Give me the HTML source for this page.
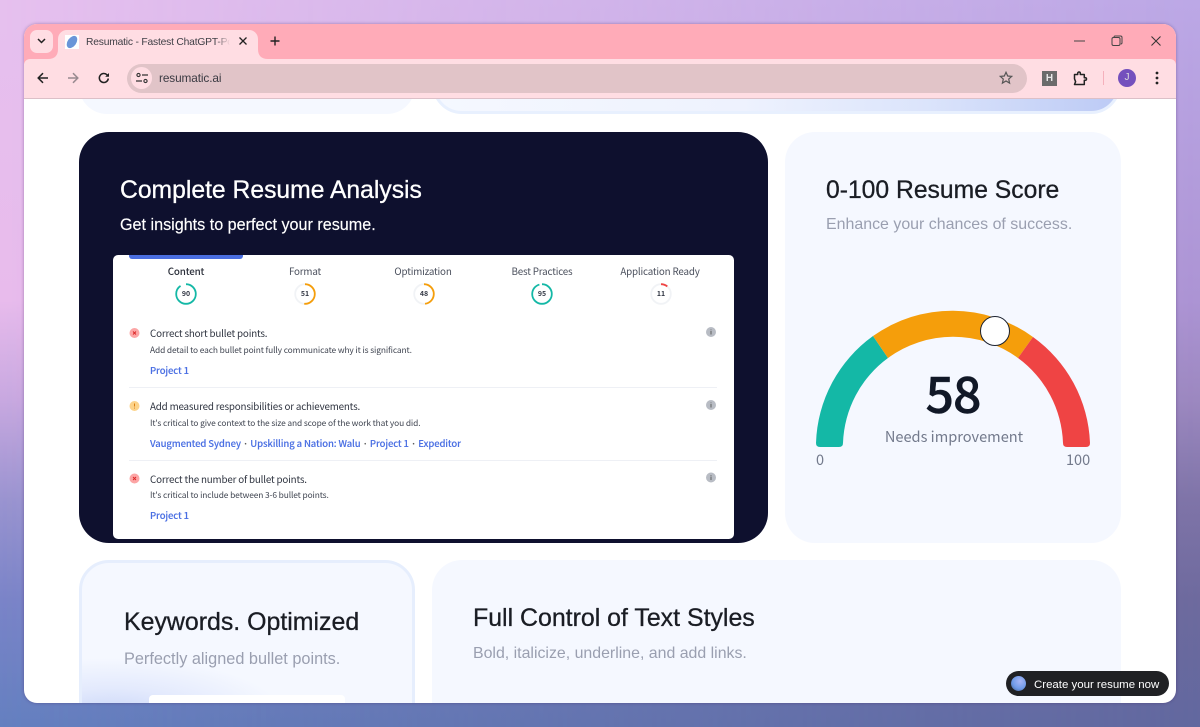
<!DOCTYPE html>
<html><head><meta charset="utf-8"><title>Resumatic</title>
<style>
html,body{margin:0;padding:0}
body{width:1200px;height:727px;overflow:hidden;position:relative;font-family:"Liberation Sans",sans-serif;
background:linear-gradient(180deg,#bca8e6 0,#ac94d4 300px,#9c88c0 400px,#7f74a8 500px,#6e6a9e 600px,#62689f 727px)}
#bgl{position:absolute;left:0;top:0;width:1200px;height:727px;background:linear-gradient(180deg,#e6c0ee 0,#e8bbec 300px,#c8a8e0 400px,#9a94d0 500px,#7a84c8 600px,#6480c0 727px);-webkit-mask-image:linear-gradient(90deg,#000,transparent);mask-image:linear-gradient(90deg,#000,transparent)}
#win{position:absolute;left:24px;top:24px;width:1152px;height:679px;border-radius:13px;overflow:hidden;background:#fff;box-shadow:0 0 3px rgba(60,30,90,.4)}
#win .a{margin-left:-24px;margin-top:-24px}
.a{position:absolute;white-space:nowrap}
.s{font-family:"Noto Sans CJK JP","Liberation Sans",sans-serif}
.h{font-size:24.7px;color:#1a1d24;-webkit-text-stroke:.3px currentColor}
.sub{font-size:16px;color:#9a9fb0}
.tab{font-size:9.8px;letter-spacing:-.18px;color:#4a4f5c;text-align:center;width:120px}
.t1{font-size:9.8px;letter-spacing:-.18px;color:#2f3440}
.t2{font-size:8.4px;letter-spacing:-.11px;color:#3f4450}
.l{font-size:9.5px;letter-spacing:-.12px;color:#4a6fe3;font-weight:500;-webkit-text-stroke:.1px currentColor}
.n{font-size:7px;font-weight:700;color:#333845;text-align:center;width:24px}
</style></head><body>
<div id="bgl"></div>
<div id="win">
<div class="a" style="left:24px;top:24px;width:1152px;height:40px;background:#ffabb8"></div>
<div class="a" style="left:24px;top:59px;width:1152px;height:39px;background:#ffdde3;border-bottom:1px solid #dcc0c8;border-radius:6px 6px 0 0"></div>

<div class="a" style="left:30px;top:30px;width:23px;height:23px;border-radius:7px;background:#ffdde3"></div>
<svg class="a" style="left:37px;top:37px" width="9" height="8" viewBox="0 0 9 8"><path d="M1 2l3.500 3.500L8 2" fill="none" stroke="#222" stroke-width="1.500"/></svg>
<div class="a" style="left:58px;top:30px;width:200px;height:30px;background:#ffdde3;border-radius:9px 9px 0 0"></div>
<svg class="a" style="left:48px;top:49px" width="220" height="11" viewBox="0 0 220 11"><path d="M10 0Q10 10 0 10H10ZM210 0Q210 10 220 10H210Z" fill="#ffdde3"/></svg>
<svg class="a" style="left:65px;top:35px" width="14" height="14" viewBox="0 0 14 14"><rect width="14" height="14" fill="#fff"/><ellipse cx="7" cy="7" rx="4.300" ry="6.800" transform="rotate(35 7 7)" fill="#6a95d8"/></svg>
<div class="a" style="left:86px;top:35px;width:144px;overflow:hidden;font-size:10.3px;letter-spacing:-.2px;color:#3f3f46;line-height:15px;-webkit-mask-image:linear-gradient(90deg,#000 90%,transparent);mask-image:linear-gradient(90deg,#000 90%,transparent)">Resumatic - Fastest ChatGPT-Powered</div>
<svg class="a" style="left:238px;top:36px" width="10" height="10" viewBox="0 0 10 10"><path d="M1.500 1.500l7 7M8.500 1.500l-7 7" stroke="#222" stroke-width="1.300"/></svg>
<svg class="a" style="left:270px;top:36px" width="10" height="10" viewBox="0 0 10 10"><path d="M5 .5v9M.5 5h9" stroke="#222" stroke-width="1.400"/></svg>

<svg class="a" style="left:37px;top:72px" width="12" height="12" viewBox="0 0 12 12"><path d="M11 6H1.500M6 1.200L1.200 6 6 10.800" fill="none" stroke="#222" stroke-width="1.500"/></svg>
<svg class="a" style="left:67px;top:72px" width="12" height="12" viewBox="0 0 12 12"><path d="M1 6h9.500M6 1.200L10.800 6 6 10.800" fill="none" stroke="#998a90" stroke-width="1.500"/></svg>
<svg class="a" style="left:98px;top:72px" width="12" height="12" viewBox="0 0 12 12"><path d="M10.300 6.500A4.500 4.500 0 1 1 9 2.800L10.500 4" fill="none" stroke="#222" stroke-width="1.500"/><path d="M11 1v3.800H7.200z" fill="#222"/></svg>
<div class="a" style="left:127px;top:64px;width:900px;height:29px;border-radius:15px;background:#e1c4c8"></div>
<div class="a" style="left:131px;top:67px;width:21px;height:22px;border-radius:11px;background:#ffdde3"></div>
<svg class="a" style="left:135px;top:72px" width="14" height="12" viewBox="0 0 14 12"><circle cx="3.500" cy="3" r="1.600" fill="none" stroke="#333" stroke-width="1.100"/><path d="M7 3h6M1 9h6" stroke="#333" stroke-width="1.200"/><circle cx="10.500" cy="9" r="1.600" fill="none" stroke="#333" stroke-width="1.100"/></svg>
<div class="a" style="left:159px;top:70px;font-size:11.8px;letter-spacing:-.1px;color:#3a3a42;line-height:16px">resumatic.ai</div>
<svg class="a" style="left:999px;top:71px" width="14" height="14" viewBox="0 0 14 14"><path d="M7 1.300l1.700 3.700 4 .4-3 2.700.9 4-3.600-2.100-3.600 2.100.9-4-3-2.700 4-.4z" fill="none" stroke="#555" stroke-width="1.200"/></svg>
<div class="a" style="left:1042px;top:71px;width:15px;height:15px;background:#6b6b6b;color:#e8e8e8;font-size:10px;font-weight:700;text-align:center;line-height:15px">H</div>
<svg class="a" style="left:1073px;top:71px" width="15" height="15" viewBox="0 0 15 15"><path d="M1.500 3.500h3.200V2.300a1.300 1.300 0 0 1 2.600 0v1.200h4v3.300h1a1.200 1.200 0 0 1 0 2.400h-1v4.300h-9.800l1.100-2.800-1.100-2.900z" fill="none" stroke="#222" stroke-width="1.500" stroke-linejoin="round"/></svg>
<div class="a" style="left:1103px;top:71px;width:1px;height:14px;background:#f5b0bc"></div>
<div class="a" style="left:1118px;top:69px;width:18px;height:18px;border-radius:9px;background:#7450bd;color:#ddd;font-size:10px;text-align:center;line-height:18px">J</div>
<svg class="a" style="left:1155px;top:71px" width="4" height="14" viewBox="0 0 4 14"><circle cx="2" cy="2" r="1.400" fill="#222"/><circle cx="2" cy="7" r="1.400" fill="#222"/><circle cx="2" cy="12" r="1.400" fill="#222"/></svg>
<svg class="a" style="left:1073px;top:40px" width="14" height="2" viewBox="0 0 14 2"><path d="M1 1h11" stroke="#444" stroke-width="1"/></svg>
<svg class="a" style="left:1111px;top:35px" width="12" height="12" viewBox="0 0 12 12"><rect x="1" y="2.500" width="8" height="8" rx="1.500" fill="none" stroke="#444"/><path d="M3 2.300V2.200a1.200 1.200 0 0 1 1.200-1.200h5.300A1.500 1.500 0 0 1 11 2.500v5.300A1.200 1.200 0 0 1 9.800 9" fill="none" stroke="#444"/></svg>
<svg class="a" style="left:1151px;top:36px" width="10" height="10" viewBox="0 0 10 10"><path d="M.5.500l9 9M9.500.500l-9 9" stroke="#333" stroke-width="1"/></svg>

<div class="a" style="left:79px;top:60px;width:336px;height:54px;border-radius:0 0 28px 28px;background:#f5f8ff;clip-path:inset(39px 0 0 0)"></div>
<div class="a" style="left:432px;top:30px;width:689px;height:84px;box-sizing:border-box;border:3px solid #e8f0fe;border-radius:30px;background:linear-gradient(92deg,#f5f8ff 0%,#eef2fe 45%,#dbe4fb 72%,#bccaf5 100%);clip-path:inset(69px 0 0 0)"></div>

<div class="a" style="left:79px;top:132px;width:689px;height:411px;border-radius:30px;background:#0e102e"></div>
<div class="a" style="left:120px;top:176px;font-size:24.7px;line-height:29px;color:#fff;-webkit-text-stroke:.3px #fff">Complete Resume Analysis</div>
<div class="a" style="left:120px;top:215px;font-size:16.15px;line-height:20px;color:#fff;-webkit-text-stroke:.15px #fff">Get insights to perfect your resume.</div>

<div class="a" style="left:113px;top:255px;width:621px;height:284px;background:#fff;border-radius:5px"></div>
<div class="a" style="left:129px;top:255px;width:114px;height:4px;background:#4a6ee0;border-radius:0 0 3px 3px"></div>

<div class="a s tab" style="left:126px;top:264px;font-weight:500;color:#2b2f3a;line-height:14px">Content</div>
<div class="a s tab" style="left:245px;top:264px;line-height:14px">Format</div>
<div class="a s tab" style="left:363px;top:264px;line-height:14px">Optimization</div>
<div class="a s tab" style="left:482px;top:264px;line-height:14px">Best Practices</div>
<div class="a s tab" style="left:600px;top:264px;line-height:14px">Application Ready</div>

<svg class="a" style="left:0;top:0" width="1200" height="727" viewBox="0 0 1200 727" fill="none" stroke-width="1.800">
<g transform="rotate(-90 186 294)"><circle cx="186" cy="294" r="9.800" stroke="#14b8a6" stroke-dasharray="55.400 6.200"/></g>
<circle cx="305" cy="294" r="9.800" stroke="#f1f3f6"/><g transform="rotate(-90 305 294)"><circle cx="305" cy="294" r="9.800" stroke="#f59e0b" stroke-dasharray="31.400 30.200"/></g>
<circle cx="424" cy="294" r="9.800" stroke="#f1f3f6"/><g transform="rotate(-90 424 294)"><circle cx="424" cy="294" r="9.800" stroke="#f59e0b" stroke-dasharray="29.500 32.100"/></g>
<g transform="rotate(-90 542 294)"><circle cx="542" cy="294" r="9.800" stroke="#14b8a6" stroke-dasharray="58.500 3.100"/></g>
<circle cx="661" cy="294" r="9.800" stroke="#f1f3f6"/><g transform="rotate(-90 661 294)"><circle cx="661" cy="294" r="9.800" stroke="#ef4444" stroke-dasharray="6.800 54.800"/></g>
</svg>
<div class="a s n" style="left:174px;top:289px;line-height:10px">90</div>
<div class="a s n" style="left:293px;top:289px;line-height:10px">51</div>
<div class="a s n" style="left:412px;top:289px;line-height:10px">48</div>
<div class="a s n" style="left:530px;top:289px;line-height:10px">95</div>
<div class="a s n" style="left:649px;top:289px;line-height:10px">11</div>

<svg class="a" style="left:0;top:0" width="1200" height="727" viewBox="0 0 1200 727">
<circle cx="134.500" cy="333" r="5" fill="#fca5a5"/><path d="M133 331.500l3 3M136 331.500l-3 3" stroke="#dc2626" stroke-width=".9"/>
<circle cx="134.500" cy="406" r="5" fill="#fcd38a"/><path d="M134.500 403.500v3M134.500 407.600v.9" stroke="#d97706" stroke-width=".9"/>
<circle cx="134.500" cy="478.500" r="5" fill="#fca5a5"/><path d="M133 477l3 3M136 477l-3 3" stroke="#dc2626" stroke-width=".9"/>
<circle cx="711" cy="332" r="5" fill="#b8bcc4"/><path d="M711 331v3.500M711 329.500v.8" stroke="#555" stroke-width=".9"/>
<circle cx="711" cy="405" r="5" fill="#b8bcc4"/><path d="M711 404v3.500M711 402.500v.8" stroke="#555" stroke-width=".9"/>
<circle cx="711" cy="477.500" r="5" fill="#b8bcc4"/><path d="M711 476.500v3.500M711 475v.8" stroke="#555" stroke-width=".9"/>
<path d="M129 387.500h588M129 460.500h588" stroke="#eef0f5" stroke-width="1"/>
</svg>

<div class="a s t1" style="left:150px;top:326px;line-height:14px">Correct short bullet points.</div>
<div class="a s t2" style="left:150px;top:344px;line-height:12px">Add detail to each bullet point fully communicate why it is significant.</div>
<div class="a s l" style="left:150px;top:363px;line-height:14px">Project 1</div>

<div class="a s t1" style="left:150px;top:399px;line-height:14px">Add measured responsibilities or achievements.</div>
<div class="a s t2" style="left:150px;top:417px;line-height:12px">It's critical to give context to the size and scope of the work that you did.</div>
<div class="a s l" style="left:150px;top:436px;line-height:14px">Vaugmented Sydney <span style="color:#555">·</span> Upskilling a Nation: Walu <span style="color:#555">·</span> Project 1 <span style="color:#555">·</span> Expeditor</div>

<div class="a s t1" style="left:150px;top:472px;line-height:14px">Correct the number of bullet points.</div>
<div class="a s t2" style="left:150px;top:489px;line-height:12px">It's critical to include between 3-6 bullet points.</div>
<div class="a s l" style="left:150px;top:508px;line-height:14px">Project 1</div>

<div class="a" style="left:785px;top:132px;width:336px;height:411px;border-radius:30px;background:#f5f8ff"></div>
<div class="a h" style="left:826px;top:176px;line-height:29px;font-size:24.7px">0-100 Resume Score</div>
<div class="a sub" style="left:826px;top:215px;line-height:20px;font-size:15.95px">Enhance your chances of success.</div>

<svg class="a" style="left:0;top:0" width="1200" height="727" viewBox="0 0 1200 727">
<path d="M816 443A137 137 0 0 1 873 336L888 358A110 110 0 0 0 843 443Q843 447 839 447H820Q816 447 816 443Z" fill="#14b8a6"/>
<path d="M873 336A137 137 0 0 1 1033 337L1018 358A110 110 0 0 0 888 358Z" fill="#f59e0b"/>
<path d="M1033 337A137 137 0 0 1 1090 443Q1090 447 1086 447H1067Q1063 447 1063 443A110 110 0 0 0 1018 358Z" fill="#ef4444"/>
<circle cx="995" cy="331" r="14.500" fill="#fff" stroke="#1c2230" stroke-width="1"/>
</svg>
<div class="a s" style="left:853px;top:357px;width:200px;text-align:center;font-size:50px;line-height:70px;font-weight:500;letter-spacing:-1px;color:#111827;-webkit-text-stroke:.5px #111827">58</div>
<div class="a s" style="left:854px;top:427px;width:200px;text-align:center;font-size:14.6px;line-height:20px;color:#737a8c">Needs improvement</div>
<div class="a s" style="left:816px;top:450px;font-size:14.500px;line-height:19px;color:#737a8c">0</div>
<div class="a s" style="left:1066px;top:450px;font-size:14.500px;line-height:19px;color:#737a8c">100</div>

<div class="a" style="left:79px;top:560px;width:336px;height:190px;box-sizing:border-box;border:3px solid #e6eefd;border-radius:30px;background:radial-gradient(ellipse 170px 55px at 30px 150px,#ccd8f8 0%,rgba(220,228,252,.7) 45%,rgba(245,248,255,0) 100%),#f5f8ff"></div>
<div class="a h" style="left:124px;top:608px;line-height:29px;font-size:24.9px">Keywords. Optimized</div>
<div class="a sub" style="left:124px;top:649px;line-height:20px;font-size:16.3px">Perfectly aligned bullet points.</div>
<div class="a" style="left:149px;top:695px;width:196px;height:30px;background:#fff;border-radius:4px"></div>

<div class="a" style="left:432px;top:560px;width:689px;height:190px;border-radius:30px;background:#f5f8ff"></div>
<div class="a h" style="left:473px;top:604px;line-height:29px;font-size:24.9px">Full Control of Text Styles</div>
<div class="a sub" style="left:473px;top:644px;line-height:20px;font-size:15.9px">Bold, italicize, underline, and add links.</div>

<div class="a" style="left:1006px;top:671px;width:163px;height:25px;border-radius:13px;background:#202124"></div>
<div class="a" style="left:1011px;top:676px;width:15px;height:15px;border-radius:8px;background:radial-gradient(circle at 60% 35%,#a9b6f5 0%,#6f9be8 55%,#3f5580 100%)"></div>
<div class="a" style="left:1034px;top:678px;font-size:11.45px;line-height:14px;color:#fff">Create your resume now</div>
</div>
</body></html>
